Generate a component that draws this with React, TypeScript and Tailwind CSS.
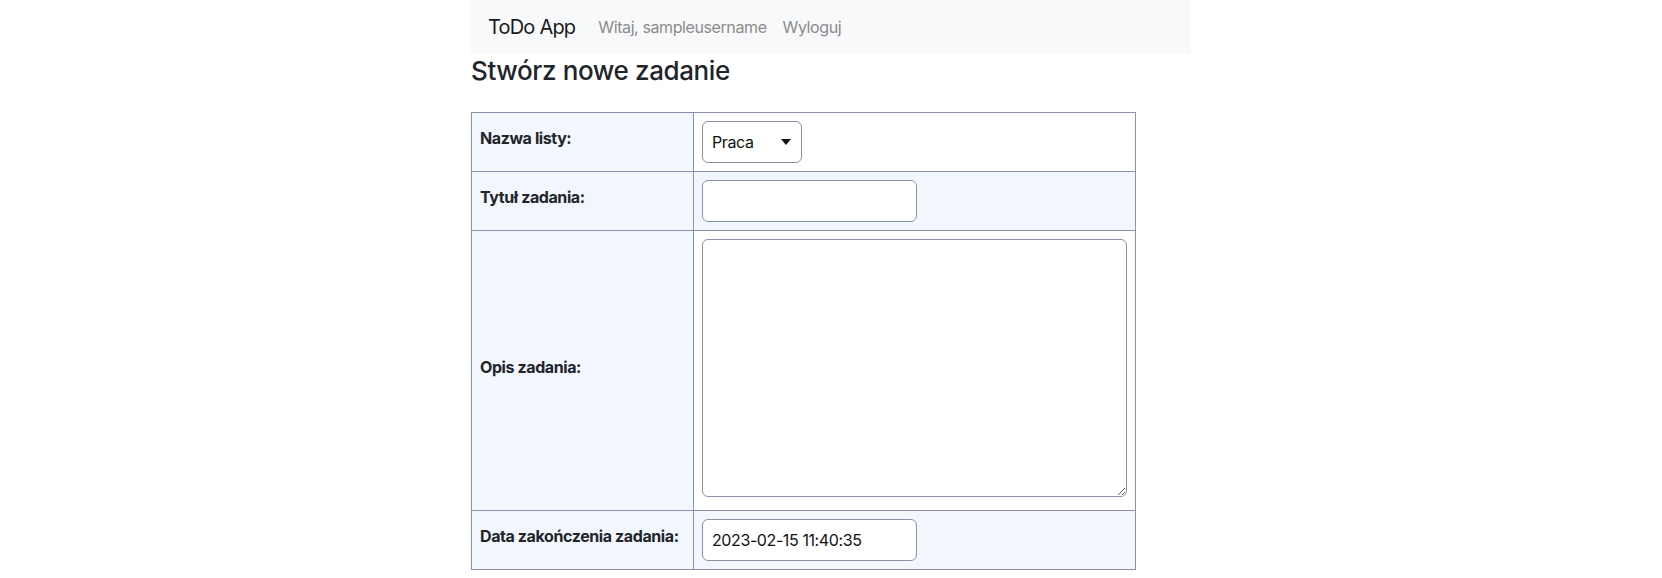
import { useState } from "react";

const font = { fontFamily: "Inter, 'Noto Sans', sans-serif" };

function NavBar() {
  return (
    <nav className="flex h-[54px] items-center bg-[#f8f9fa] pl-[17px] tracking-[-0.025em]">
      <span className="mr-[15px] text-[20px] tracking-[-0.04em] text-[#1a1a1a]">ToDo App</span>
      <span className="px-2 text-[16px] text-[#8a8b8c]">Witaj, sampleusername</span>
      <span className="px-2 text-[16px] text-[#8a8b8c]">Wyloguj</span>
    </nav>
  );
}

function Row({
  label,
  shaded,
  children,
}: {
  label: string;
  shaded?: boolean;
  children: React.ReactNode;
}) {
  return (
    <tr>
      <th className="w-[222px] border border-[#8d91ab] bg-[#f2f6fd] px-2 text-left align-middle text-[16px] font-bold whitespace-nowrap tracking-[-0.025em] text-[#212529]">
        <span className="mb-2 inline-block">{label}</span>
      </th>
      <td className={`border border-[#8d91ab] px-2 py-2 align-top ${shaded ? "bg-[#f2f6fd]" : "bg-white"}`}>
        {children}
      </td>
    </tr>
  );
}

export default function App() {
  const [list, setList] = useState("Praca");
  const [title, setTitle] = useState("");
  const [desc, setDesc] = useState("");
  const [date, setDate] = useState("2023-02-15 11:40:35");

  return (
    <div className="min-h-screen bg-white" style={font}>
      <div className="mx-auto w-[720px]">
        <NavBar />
        <h3 className="mt-[1px] mb-[26px] text-[26px] leading-[1.2] font-medium tracking-[-0.015em] text-[#212529]">
          Stwórz nowe zadanie
        </h3>
        <table className="w-[665px] border-collapse">
          <tbody>
            <Row label="Nazwa listy:">
              <div className="relative w-[100px]">
                <select
                  value={list}
                  onChange={(e) => setList(e.target.value)}
                  className="h-[42px] w-full appearance-none rounded-[6px] border border-[#8e92a6] bg-white pl-[9px] text-[16px] tracking-[-0.025em] text-[#111]"
                >
                  <option>Praca</option>
                  <option>Dom</option>
                  <option>Zakupy</option>
                </select>
                <svg className="pointer-events-none absolute top-[18px] right-[11px]" width="10" height="6" viewBox="0 0 10 6">
                  <path d="M0 0h10L5 6z" fill="#111" />
                </svg>
              </div>
            </Row>
            <Row label="Tytuł zadania:" shaded>
              <input
                value={title}
                onChange={(e) => setTitle(e.target.value)}
                className="block h-[42px] w-[215px] rounded-[6px] border border-[#8e92a6] bg-white px-[9px] text-[16px]"
              />
            </Row>
            <Row label="Opis zadania:">
              <textarea
                value={desc}
                onChange={(e) => setDesc(e.target.value)}
                className="mb-[5px] block h-[258px] w-[425px] rounded-[6px] border border-[#8e92a6] bg-white px-[9px] text-[16px]"
              />
            </Row>
            <Row label="Data zakończenia zadania:" shaded>
              <input
                value={date}
                onChange={(e) => setDate(e.target.value)}
                className="block h-[42px] w-[215px] rounded-[6px] border border-[#8e92a6] bg-white px-[9px] text-[16px] tracking-[-0.025em] text-[#111]"
              />
            </Row>
          </tbody>
        </table>
      </div>
    </div>
  );
}
